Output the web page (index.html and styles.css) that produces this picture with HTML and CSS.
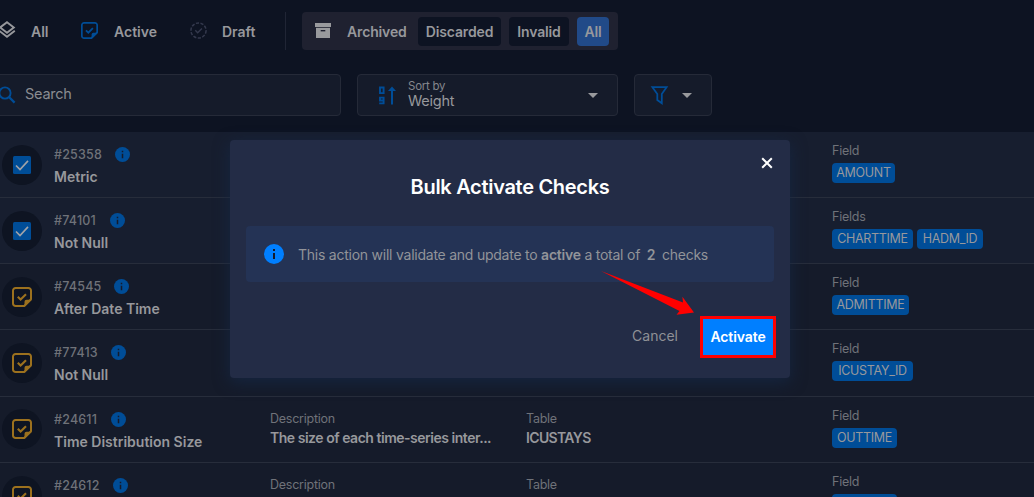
FILE: index.html
```html
<!DOCTYPE html>
<html lang="en">
<head>
<meta charset="utf-8">
<title>Checks</title>
<link rel="stylesheet" href="styles.css">
</head>
<body>
<svg class="defs" aria-hidden="true">
  <symbol id="note" viewBox="0 0 20 20"><path d="M12.2 19H3.6A2.6 2.6 0 0 1 1 16.4V3.6A2.6 2.6 0 0 1 3.6 1h12.8A2.6 2.6 0 0 1 19 3.6v8.6z" fill="none" stroke="currentColor" stroke-width="2"/><path d="M12.5 20v-5.3a2 2 0 0 1 2-2H20z" fill="currentColor"/><path d="M5.8 9.8l2.8 2.8L14 7.2" fill="none" stroke="currentColor" stroke-width="2.1"/></symbol>
  <symbol id="box" viewBox="0 0 18 18"><rect width="18" height="18" rx="1.5" fill="#004d97"/><path d="M3 9.5l4 4.1 8-8.7" fill="none" stroke="#a1a3a8" stroke-width="1.6"/></symbol>
  <symbol id="info" viewBox="0 0 20 20"><circle cx="10" cy="10" r="10" fill="currentColor"/><path d="M9 5h2v2H9zM9 9h2v6H9z" class="info-mark"/></symbol>
</svg>

<nav class="tabs">
  <span class="tab"><svg class="ic-layers" viewBox="0 0 18 18"><path d="M9 1.2l6.8 5.2L9 11.7 2.2 6.4z" fill="none" stroke="currentColor" stroke-width="1.9"/><path d="M1.2 9.8L9 15.8l7.8-6" fill="none" stroke="currentColor" stroke-width="1.9"/></svg><b class="t-all">All</b></span>
  <span class="tab tab-active"><svg class="ic-note"><use href="#note"/></svg><b>Active</b></span>
  <span class="tab tab-draft"><svg class="ic-draft" viewBox="0 0 18 18"><circle cx="9" cy="9" r="8" fill="none" stroke="currentColor" stroke-width="1.6" stroke-dasharray="3.4 1.55" /><path d="M5.6 8.8l2.5 2.5 4.5-4.5" fill="none" stroke="currentColor" stroke-width="1.5"/></svg><b>Draft</b></span>
  <span class="divider"></span>
  <div class="archived">
    <svg class="ic-arch" viewBox="0 0 16 15"><path d="M0 0h16v4H0z" fill="#999a9d"/><path d="M1 4.8h14V15H1z" fill="#999a9d"/><path d="M5.7 7h4.6v1.4H5.7z" fill="#1f2130"/></svg>
    <b class="t-arch">Archived</b>
    <b class="chip chip-disc">Discarded</b>
    <b class="chip chip-inv">Invalid</b>
    <b class="chip chip-all">All</b>
  </div>
</nav>

<div class="filters">
  <div class="search"><svg viewBox="0 0 18 18"><circle cx="7" cy="7" r="5.6" fill="none" stroke="currentColor" stroke-width="1.9"/><path d="M11 11l5.6 5.6" stroke="currentColor" stroke-width="2.3"/></svg><span>Search</span></div>
  <div class="sort">
    <svg class="ic-sort" viewBox="0 0 18 19"><path d="M2 1.5h3.6v5.6H2zM6.5 17.4H1.2M5.6 17.4v-5.8H2v2.9h3.6" fill="none" stroke="currentColor" stroke-width="1.9"/><path d="M14 18.5V4" stroke="currentColor" stroke-width="2"/><path d="M14 .5L18 5h-8z" fill="currentColor"/></svg>
    <span class="sort-text"><small>Sort by</small><span>Weight</span></span>
    <i class="caret"></i>
  </div>
  <div class="funnel"><svg viewBox="0 0 17 19"><path d="M1.4 1.2h14.2L10.8 8v9.3L6.3 14V8z" fill="none" stroke="currentColor" stroke-width="1.8"/></svg><i class="caret"></i></div>
</div>

<main class="rows">
  <section class="row selected"><div class="disc"><svg class="ic-box"><use href="#box"/></svg></div>
    <div class="check"><p class="id">#25358<svg class="ic-info"><use href="#info"/></svg></p><p class="name">Metric</p></div><div class="desc"></div><div class="table"></div>
    <div class="field"><p class="label">Field</p><p class="tags"><span class="tag">AMOUNT</span></p></div></section>
  <section class="row selected"><div class="disc"><svg class="ic-box"><use href="#box"/></svg></div>
    <div class="check"><p class="id id-b">#74101<svg class="ic-info"><use href="#info"/></svg></p><p class="name">Not Null</p></div><div class="desc"></div><div class="table"></div>
    <div class="field"><p class="label">Fields</p><p class="tags"><span class="tag w81">CHARTTIME</span><span class="tag w66">HADM_ID</span></p></div></section>
  <section class="row"><div class="disc"><svg class="ic-row"><use href="#note"/></svg></div>
    <div class="check"><p class="id id-c">#74545<svg class="ic-info"><use href="#info"/></svg></p><p class="name">After Date Time</p></div><div class="desc"></div><div class="table"></div>
    <div class="field"><p class="label">Field</p><p class="tags"><span class="tag w77">ADMITTIME</span></p></div></section>
  <section class="row"><div class="disc"><svg class="ic-row"><use href="#note"/></svg></div>
    <div class="check"><p class="id id-d">#77413<svg class="ic-info"><use href="#info"/></svg></p><p class="name">Not Null</p></div><div class="desc"></div><div class="table"></div>
    <div class="field"><p class="label">Field</p><p class="tags"><span class="tag w81">ICUSTAY_ID</span></p></div></section>
  <section class="row"><div class="disc"><svg class="ic-row"><use href="#note"/></svg></div>
    <div class="check"><p class="id id-d">#24611<svg class="ic-info"><use href="#info"/></svg></p><p class="name">Time Distribution Size</p></div>
    <div class="desc"><p class="label">Description</p><p class="value">The size of each time-series inter...</p></div>
    <div class="table"><p class="label">Table</p><p class="value value-caps">ICUSTAYS</p></div>
    <div class="field"><p class="label">Field</p><p class="tags"><span class="tag w65">OUTTIME</span></p></div></section>
  <section class="row"><div class="disc"><svg class="ic-row"><use href="#note"/></svg></div>
    <div class="check"><p class="id id-e">#24612<svg class="ic-info"><use href="#info"/></svg></p></div>
    <div class="desc"><p class="label">Description</p></div>
    <div class="table"><p class="label">Table</p></div>
    <div class="field"><p class="label">Field</p><p class="tags"><span class="tag w65"></span></p></div></section>
</main>

<div class="modal" role="dialog">
  <div class="modal-top"><svg class="ic-close" viewBox="0 0 12 12"><path d="M1.2 1.2l9.6 9.6M10.8 1.2L1.2 10.8" stroke="#fff" stroke-width="2"/></svg></div>
  <h1>Bulk Activate Checks</h1>
  <div class="alert"><svg class="ic-alert"><use href="#info"/></svg><span class="msg">This action will validate and update to <b>active</b> a total of <b class="count">2</b> checks</span></div>
  <div class="actions"><span class="cancel">Cancel</span><span class="activate"><b>Activate</b></span></div>
  <svg class="arrow" viewBox="0 0 94 46"><path d="M0 0l82 31.5-.6-5.8L93 41.5l-17.5 2.3 3-3.8z" fill="#f00"/></svg>
</div>
</body>
</html>
```
FILE: styles.css
```css
* { box-sizing: border-box; }
html { height: 497px; overflow: hidden; }
body { margin: 0; width: 1034px; height: 497px; overflow: hidden; position: relative; background: #0d1322; color: #97989c; font: 14px/18px Inter, "Liberation Sans", sans-serif; }
p, h1 { margin: 0; }
b { font-weight: 600; }
svg { display: block; flex: none; overflow: visible; }
.defs { width: 0; height: 0; position: absolute; }

.tabs { display: flex; align-items: center; height: 62px; white-space: nowrap; }
.tab { display: flex; align-items: center; height: 20px; width: 81px; }
.tab b { margin-top: 1px; }
.ic-layers { width: 18px; height: 18px; margin: -2px 15px 0 -2px; }
.ic-note { width: 17px; height: 17px; margin: -2px 16px 0 0; color: #004d97; }
.tab-active { width: 108px; }
.ic-draft { width: 17px; height: 17px; margin: -2px 15px 0 1px; color: #34394d; }
.tab-draft { width: 96px; }
.divider { width: 1px; height: 38px; background: #202535; }
.archived { display: flex; align-items: center; width: 316px; height: 38px; margin-left: 16px; padding-left: 13px; background: #1f2130; border-radius: 4px; letter-spacing: -.15px; }
.ic-arch { width: 16px; height: 15px; margin: -1px 16px 0 0; }
.t-arch { width: 71px; margin-top: 2px; }
.chip { height: 29px; line-height: 29px; text-align: center; background: #0d1322; border-radius: 4px; }
.chip-disc { width: 83px; }
.chip-inv { width: 60px; margin: 0 8px; }
.chip-all { width: 32px; background: #214a88; }

.filters { display: flex; height: 42px; margin: 12px 0 16px; }
.filters > div { display: flex; align-items: center; background: #151b2a; border: 1px solid #252a38; border-radius: 4px; }
.filters .search { width: 345px; margin-left: -4px; padding-left: 1px; color: #8a8c91; font-size: 14.5px; letter-spacing: -.25px; }
.search svg { width: 18px; height: 18px; margin-right: 9px; color: #004d97; }
.search span { margin-top: -3px; }
.filters .sort { width: 261px; margin: 0 16px; padding-left: 20px; }
.ic-sort { width: 18px; height: 19px; color: #004d97; }
.sort-text { display: flex; flex-direction: column; width: 180px; margin: -2px 0 0 12px; font-size: 14.5px; line-height: 16px; letter-spacing: -.25px; }
.sort-text small { font-size: 11.5px; line-height: 13px; color: #85878d; }
.caret { width: 0; height: 0; border: 5.5px solid transparent; border-top-color: #999a9d; border-bottom: 0; }
.funnel { width: 78px; padding-left: 16px; }
.funnel svg { width: 17px; height: 19px; margin-right: 14px; color: #004d97; }

.rows { height: 365px; overflow: hidden; }
.row { display: flex; height: 66.15px; background: #151b2a; border-bottom: 1px solid #272d3b; }
.row.selected { background: #171e2f; }
.disc { display: flex; align-items: center; justify-content: center; width: 40px; height: 40px; margin: 12.8px 12px 0 2px; border-radius: 50%; background: #0e1422; flex: none; color: #9c711e; }
.ic-box { width: 18px; height: 18px; }
.ic-row { width: 20px; height: 20px; }
.check { width: 216px; padding-top: 14px; flex: none; }
.id { display: flex; align-items: center; justify-content: space-between; width: 76px; height: 18px; font-size: 12.5px; font-weight: 500; letter-spacing: .2px; color: #6f7279; }
.id-b { width: 71px; } .id-c { width: 75px; } .id-d { width: 72px; } .id-e { width: 74px; }
.ic-info { width: 15px; height: 15px; margin-top: -1px; color: #004d97; }
.info-mark { fill: #151b2a; }
.name { margin-top: 4px; font-weight: 600; font-size: 14px; }
.desc { width: 256px; padding-top: 13px; flex: none; }
.table { width: 306px; padding-top: 13px; flex: none; }
.label { font-size: 12.5px; line-height: 18px; letter-spacing: -.25px; color: #6f7279; }
.value { font-weight: 600; font-size: 14px; letter-spacing: -.48px; margin-top: 1px; white-space: nowrap; }
.value-caps { letter-spacing: -.65px; }
.field { padding-top: 10px; }
.tags { display: flex; gap: 4px; margin-top: 3px; }
.tag { width: 63px; height: 20px; line-height: 20px; text-align: center; font-size: 12.5px; letter-spacing: -.3px; background: #004d97; border-radius: 4px; }
.w81 { width: 81px; } .w66 { width: 66px; } .w77 { width: 77px; } .w65 { width: 65px; }

.modal { position: absolute; left: 230px; top: 140px; width: 560px; height: 238px; padding: 0 16px; background: #232c46; border-radius: 4px; box-shadow: 0 4px 16px rgba(22, 42, 72, .75); }
.modal-top { display: flex; justify-content: flex-end; padding: 17px 1px 0; }
.ic-close { width: 12px; height: 12px; }
h1 { margin-top: 6px; font-size: 20px; line-height: 24px; font-weight: 600; letter-spacing: -.3px; color: #fff; text-align: center; }
.alert { display: flex; align-items: center; height: 56px; margin-top: 27px; padding-left: 18px; background: #243355; border-radius: 4px; }
.ic-alert { width: 20px; height: 20px; color: #007fff; }
.ic-alert + .msg { margin: 2px 0 0 14px; color: #929499; white-space: nowrap; letter-spacing: -.24px; }
.count { margin: 0 3px; }
.actions { display: flex; align-items: center; justify-content: flex-end; margin: 34px -2px 0 0; }
.cancel { margin: -2px 22px 0 0; color: #8f9196; }
.activate { width: 76px; height: 42px; border: 3px solid #f00; background: #007fff; color: #fff; text-align: center; line-height: 35px; letter-spacing: -.1px; }
.arrow { position: absolute; left: 371px; top: 131px; width: 94px; height: 46px; }
```
